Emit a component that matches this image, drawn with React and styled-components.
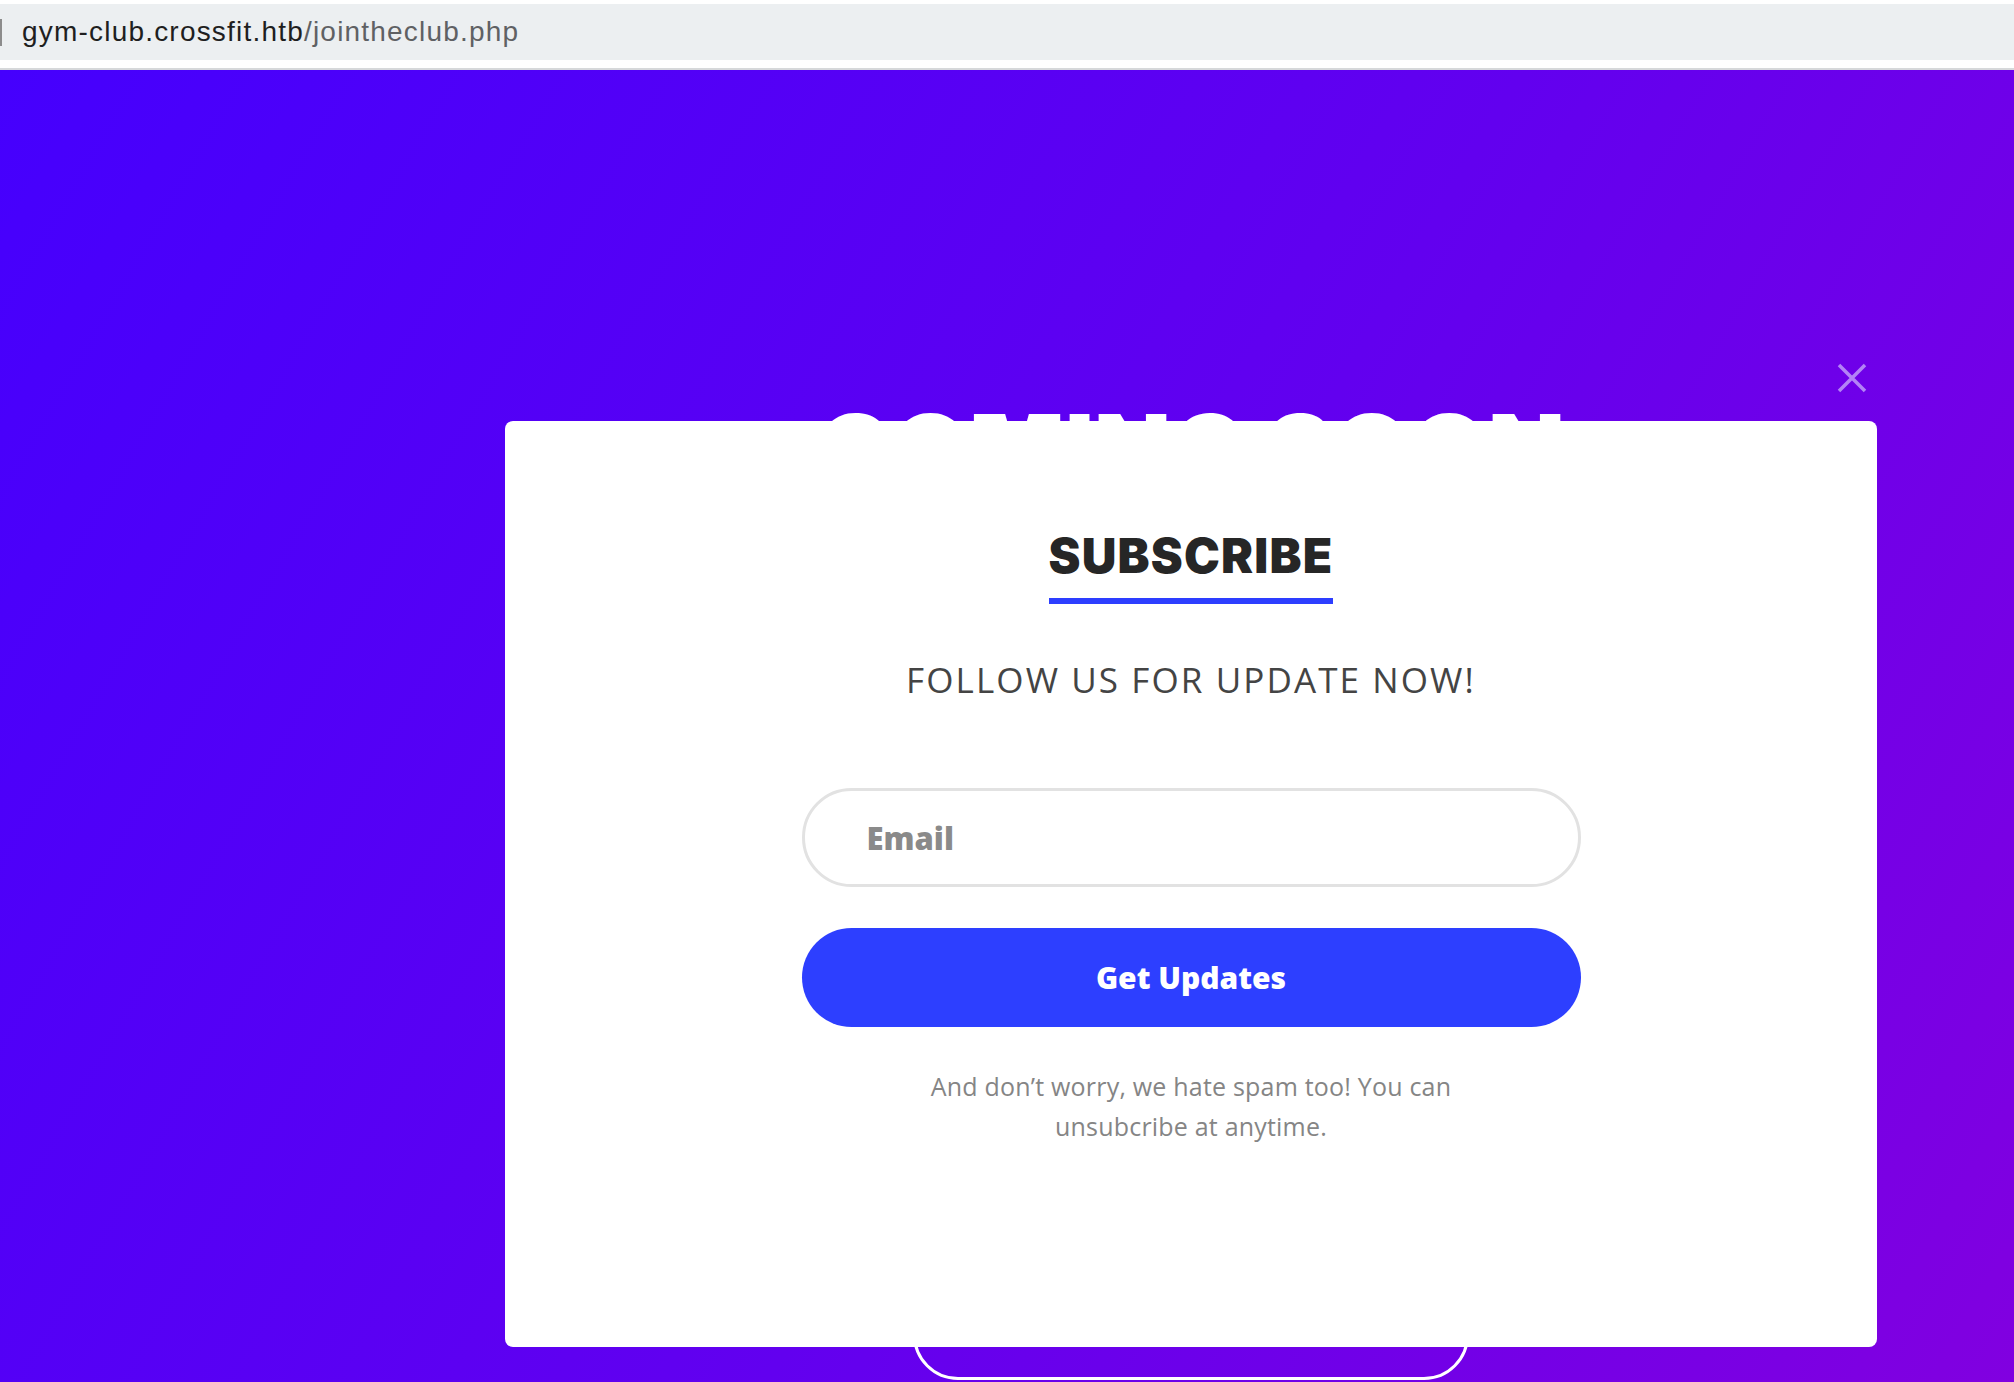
import React from 'react';
import styled, { createGlobalStyle } from 'styled-components';

const Global = createGlobalStyle`
  html, body { margin: 0; padding: 0; height: 100%; overflow: hidden; }
  body { font-family: "Open Sans", "Liberation Sans", sans-serif; }
  #root { height: 100%; }
  * { box-sizing: border-box; }
`;

const Window = styled.div`
  display: flex;
  flex-direction: column;
  height: 100vh;
  width: 100%;
`;

const AddressBar = styled.div`
  flex: none;
  height: 70px;
  padding-top: 4px;
  background: #ffffff;
  border-bottom: 2px solid #d6d8da;
`;

const UrlField = styled.div`
  height: 56px;
  display: flex;
  align-items: center;
  background: #eceff1;
  font-family: "Liberation Sans", Arial, sans-serif;
  font-size: 28px;
  letter-spacing: 1.2px;
  white-space: nowrap;
`;

const Caret = styled.span`
  width: 2px;
  height: 27px;
  background: #8c8c8c;
  margin-right: 20px;
`;

const Host = styled.span`
  color: #1f1f1f;
`;

const Path = styled.span`
  color: #5f6164;
`;

const Stage = styled.main`
  flex: 1;
  position: relative;
  overflow: hidden;
  background: linear-gradient(120deg, #4500fd 0%, #6200ef 55%, #8100e0 100%);
`;

const Canvas = styled.div`
  width: 2382px;
  height: 100%;
  display: flex;
  flex-direction: column;
  align-items: center;
  padding-top: 331px;
`;

const HeroTitle = styled.h1`
  margin: 0;
  font-family: Inter, "Liberation Sans", sans-serif;
  font-weight: 900;
  font-size: 100px;
  line-height: 1;
  color: #ffffff;
  letter-spacing: 0px;
`;

const HeroButton = styled.button`
  margin-top: 789px;
  width: 556px;
  height: 90px;
  border: 3px solid #ffffff;
  border-radius: 45px;
  background: transparent;
  color: #ffffff;
  font-family: Inter, sans-serif;
  font-weight: 800;
  font-size: 28px;
`;

const Overlay = styled.div`
  position: absolute;
  top: 0;
  left: 0;
  width: 2382px;
  height: 100%;
  display: flex;
  justify-content: center;
  padding-top: 351px;
`;

const Modal = styled.section`
  position: relative;
  width: 1372px;
  height: 926px;
  background: #ffffff;
  border-radius: 8px;
  display: flex;
  flex-direction: column;
  align-items: center;
  padding-top: 111px;
`;

const CloseButton = styled.button`
  position: absolute;
  top: -58px;
  right: 10px;
  width: 30px;
  height: 30px;
  padding: 0;
  border: none;
  background: transparent;
  cursor: pointer;
  display: flex;
`;

const Title = styled.h2`
  margin: 0;
  font-family: Inter, "Liberation Sans", sans-serif;
  font-weight: 900;
  font-size: 48px;
  line-height: 48px;
  letter-spacing: 1.2px;
  color: #262626;
  padding-bottom: 18px;
  border-bottom: 6px solid #2d3eff;
`;

const Tagline = styled.p`
  margin: 58px 0 0;
  font-family: "Open Sans", sans-serif;
  font-weight: 500;
  font-size: 35px;
  line-height: 35px;
  letter-spacing: 2.1px;
  color: #444444;
`;

const EmailInput = styled.input`
  margin-top: 91px;
  width: 779px;
  height: 99px;
  border: 3px solid #e2e2e2;
  border-radius: 50px;
  padding: 0 62px;
  font-family: "Open Sans", sans-serif;
  font-weight: 800;
  font-size: 31px;
  color: #444;
  outline: none;
  &::placeholder { color: #8a8a8a; opacity: 1; }
`;

const SubmitButton = styled.button`
  margin-top: 41px;
  width: 779px;
  height: 99px;
  border: none;
  border-radius: 50px;
  background: #2d3fff;
  color: #ffffff;
  font-family: "Open Sans", sans-serif;
  font-weight: 800;
  font-size: 30px;
  cursor: pointer;
`;

const Note = styled.p`
  margin: 39px 0 0;
  max-width: 600px;
  text-align: center;
  font-family: "Open Sans", sans-serif;
  font-size: 25px;
  line-height: 40px;
  letter-spacing: 0.2px;
  color: #858585;
`;

export default function App() {
  return (
    <>
      <Global />
      <Window>
        <AddressBar>
          <UrlField>
            <Caret />
            <Host>gym-club.crossfit.htb</Host>
            <Path>/jointheclub.php</Path>
          </UrlField>
        </AddressBar>
        <Stage>
          <Canvas>
            <HeroTitle>COMING SOON</HeroTitle>
            <HeroButton>Join the club</HeroButton>
          </Canvas>
          <Overlay>
            <Modal>
              <CloseButton aria-label="Close">
                <svg width="30" height="30" viewBox="0 0 30 30">
                  <path d="M2 2 L28 28 M28 2 L2 28" stroke="#b383f6" strokeWidth="3.5" strokeLinecap="butt" />
                </svg>
              </CloseButton>
              <Title>SUBSCRIBE</Title>
              <Tagline>FOLLOW US FOR UPDATE NOW!</Tagline>
              <EmailInput type="email" placeholder="Email" />
              <SubmitButton>Get Updates</SubmitButton>
              <Note>And don’t worry, we hate spam too! You can unsubcribe at anytime.</Note>
            </Modal>
          </Overlay>
        </Stage>
      </Window>
    </>
  );
}
